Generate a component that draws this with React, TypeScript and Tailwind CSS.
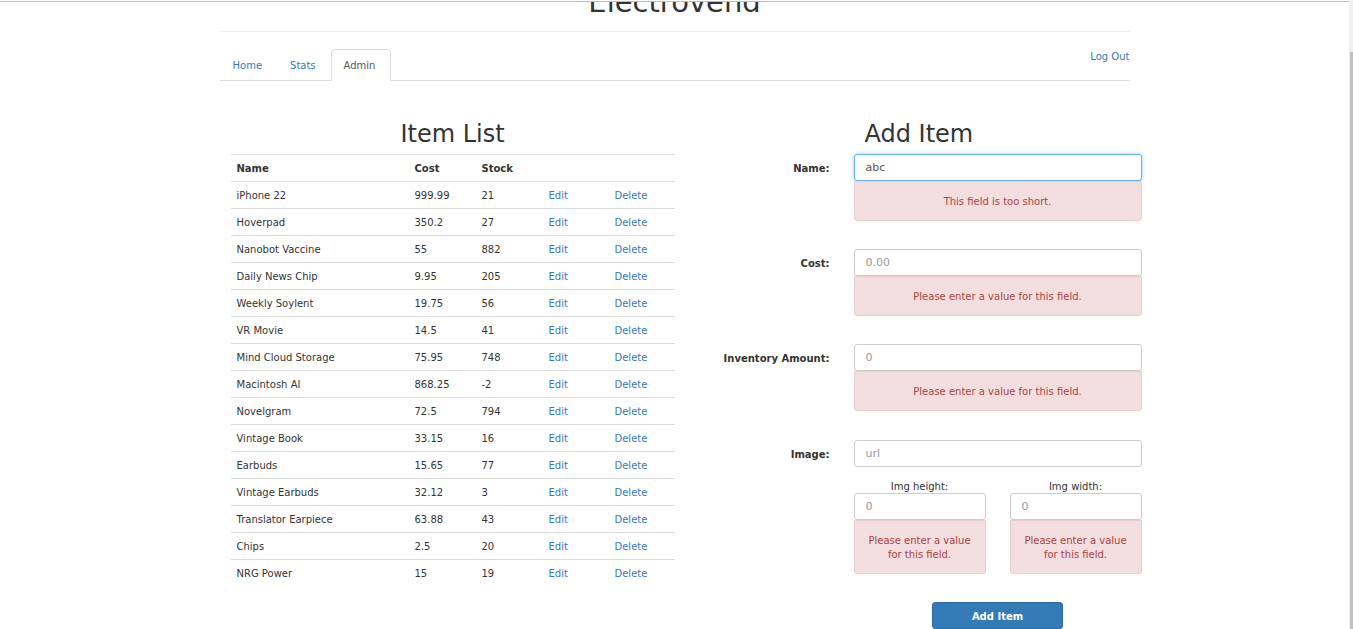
import React from "react";

const items = [
  { name: "iPhone 22", cost: "999.99", stock: "21" },
  { name: "Hoverpad", cost: "350.2", stock: "27" },
  { name: "Nanobot Vaccine", cost: "55", stock: "882" },
  { name: "Daily News Chip", cost: "9.95", stock: "205" },
  { name: "Weekly Soylent", cost: "19.75", stock: "56" },
  { name: "VR Movie", cost: "14.5", stock: "41" },
  { name: "Mind Cloud Storage", cost: "75.95", stock: "748" },
  { name: "Macintosh AI", cost: "868.25", stock: "-2" },
  { name: "Novelgram", cost: "72.5", stock: "794" },
  { name: "Vintage Book", cost: "33.15", stock: "16" },
  { name: "Earbuds", cost: "15.65", stock: "77" },
  { name: "Vintage Earbuds", cost: "32.12", stock: "3" },
  { name: "Translator Earpiece", cost: "63.88", stock: "43" },
  { name: "Chips", cost: "2.5", stock: "20" },
  { name: "NRG Power", cost: "15", stock: "19" },
];

function ErrorBox({ text, tall }: { text: string; tall?: boolean }) {
  return (
    <div
      className={
        tall
          ? "flex h-[54px] items-center justify-center rounded-b-[3px] border border-[#ebccd1] bg-[#f2dede] px-[10px] pt-[1px] text-center text-[10px] leading-[14px] text-[#a94442]"
          : "flex h-[40px] items-center justify-center rounded-b-[3px] border border-[#ebccd1] bg-[#f2dede] px-[10px] pt-[1px] text-center text-[10px] leading-[14px] text-[#a94442]"
      }
    >
      {text}
    </div>
  );
}

function TextInput({ value, placeholder, focused }: { value?: string; placeholder: string; focused?: boolean }) {
  return (
    <input
      readOnly
      value={value ?? ""}
      placeholder={placeholder}
      className={
        focused
          ? "block h-[27px] w-full rounded-[3px] border border-[#66afe9] bg-white px-[11px] text-[11px] text-[#555] shadow-[0_0_4px_rgba(102,175,233,0.6)] outline-none placeholder:text-[#999]"
          : "block h-[27px] w-full rounded-[3px] border border-[#ccc] bg-white px-[11px] text-[11px] text-[#555] outline-none placeholder:text-[#999]"
      }
    />
  );
}

function FieldRow({
  label,
  value,
  placeholder,
  error,
  focused,
}: {
  label: string;
  value?: string;
  placeholder: string;
  error?: string;
  focused?: boolean;
}) {
  return (
    <div className="flex items-start">
      <label className="flex h-[27px] w-[155px] shrink-0 items-center justify-end pt-[1px] text-[10px] font-bold">
        {label}
      </label>
      <div className="ml-[24px] w-[288px] shrink-0">
        <TextInput value={value} placeholder={placeholder} focused={focused} />
        {error && <ErrorBox text={error} />}
      </div>
    </div>
  );
}

export default function App() {
  return (
    <div className="flex h-[629px] w-[1353px] overflow-hidden bg-white font-['DejaVu_Sans',Verdana,sans-serif] text-[#333]">
      <div className="min-w-0 flex-1">
        {/* browser chrome line */}
        <div className="h-[2px] border-b border-[#bdbdbd]" />

        <div className="mx-auto w-[910px]">
          {/* header, clipped at the top */}
          <div className="h-[30px] overflow-hidden border-b border-[#eee] text-center">
            <div className="mt-[-15px] text-[29px] leading-[30px]">Electrovend</div>
          </div>

          {/* nav tabs */}
          <div className="flex items-start justify-between border-b border-[#ddd] pt-[17px]">
            <div className="-mb-px flex text-[10px]">
              <a className="mr-[2px] flex h-[31px] items-center px-[13px] pt-[1px] text-[#337ab7]">Home</a>
              <a className="mr-[2px] flex h-[31px] items-center px-[13px] pt-[1px] text-[#337ab7]">Stats</a>
              <a className="flex h-[32px] items-center rounded-t-[4px] border border-b-transparent border-[#ddd] bg-white pl-[12px] pr-[15px] pt-[1px] text-[#555]">
                Admin
              </a>
            </div>
            <a className="mt-[1px] text-[10px] leading-[14px] text-[#337ab7]">Log Out</a>
          </div>

          <div className="flex pt-[38px]">
            {/* item list */}
            <div className="w-[455px] shrink-0 pl-[11px]">
              <h2 className="text-center text-[24px] leading-[30px]">Item List</h2>
              <div className="mt-[5px] w-[444px] text-[10px]">
                <div className="grid h-[27px] grid-cols-[178px_67px_67px_66px_1fr] items-center border-t border-[#ddd] pl-[6px] pt-[1px] font-bold">
                  <span>Name</span>
                  <span>Cost</span>
                  <span>Stock</span>
                  <span />
                  <span />
                </div>
                {items.map((it) => (
                  <div
                    key={it.name}
                    className="grid h-[27px] grid-cols-[178px_67px_67px_66px_1fr] items-center border-t border-[#ddd] pl-[6px] pt-[1px]"
                  >
                    <span>{it.name}</span>
                    <span>{it.cost}</span>
                    <span>{it.stock}</span>
                    <a className="text-[#337ab7]">Edit</a>
                    <a className="text-[#337ab7]">Delete</a>
                  </div>
                ))}
              </div>
            </div>

            {/* add item form */}
            <div className="w-[455px] shrink-0">
              <h2 className="pl-[190px] text-[24px] leading-[30px]">Add Item</h2>
              <div className="mt-[5px] flex flex-col">
                <FieldRow label="Name:" value="abc" placeholder="" focused error="This field is too short." />
                <div className="mt-[28px]">
                  <FieldRow label="Cost:" placeholder="0.00" error="Please enter a value for this field." />
                </div>
                <div className="mt-[28px]">
                  <FieldRow label="Inventory Amount:" placeholder="0" error="Please enter a value for this field." />
                </div>
                <div className="mt-[29px]">
                  <FieldRow label="Image:" placeholder="url" />
                  <div className="ml-[179px] mt-[14px] flex w-[288px] justify-between">
                    <div className="w-[132px]">
                      <div className="text-center text-[10px] leading-[12px]">Img height:</div>
                      <TextInput placeholder="0" />
                      <ErrorBox text="Please enter a value for this field." tall />
                    </div>
                    <div className="w-[132px]">
                      <div className="text-center text-[10px] leading-[12px]">Img width:</div>
                      <TextInput placeholder="0" />
                      <ErrorBox text="Please enter a value for this field." tall />
                    </div>
                  </div>
                  <div className="ml-[179px] mt-[28px] flex w-[288px] justify-center">
                    <button className="h-[27px] w-[131px] rounded-[3px] border border-[#2e6da4] bg-[#337ab7] pt-[1px] text-[10px] font-bold text-white">
                      Add Item
                    </button>
                  </div>
                </div>
              </div>
            </div>
          </div>
        </div>
      </div>

      {/* scrollbar */}
      <div className="w-[4px] bg-[#f0f0f0] pl-[1px] pt-[52px]">
        <div className="h-full bg-[#c1c1c1]" />
      </div>
    </div>
  );
}
